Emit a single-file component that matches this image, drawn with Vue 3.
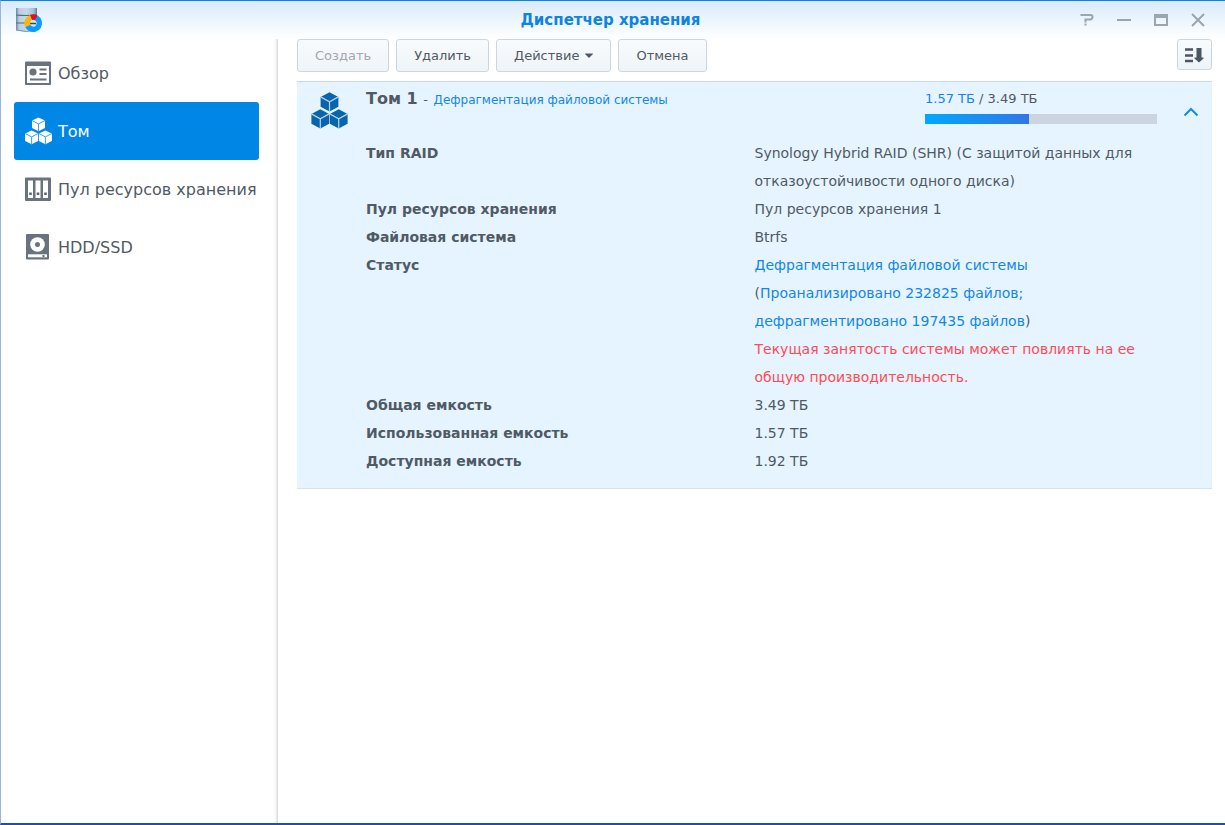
<script setup>
import { ref } from 'vue'

const nav = [
  { id: 'overview', label: 'Обзор' },
  { id: 'volume', label: 'Том' },
  { id: 'pool', label: 'Пул ресурсов хранения' },
  { id: 'disk', label: 'HDD/SSD' },
]
const active = ref('volume')
const expanded = ref(true)
const usedPercent = 45
</script>

<template>
  <div class="window">
    <header class="titlebar">
      <svg class="app-icon" viewBox="0 0 28 26" aria-hidden="true">
        <defs>
          <linearGradient id="cylinder" x1="0" x2="1" y1="0" y2="0">
            <stop offset="0" stop-color="#6488a8" />
            <stop offset="0.15" stop-color="#b9d0e3" />
            <stop offset="0.5" stop-color="#c4d9ea" />
            <stop offset="0.85" stop-color="#a5bfd6" />
            <stop offset="1" stop-color="#587c9d" />
          </linearGradient>
        </defs>
        <path d="M1 1H22V23Q11 26 1 23Z" fill="url(#cylinder)" />
        <path d="M1 8Q11 9 22 8M1 16H22" fill="none" stroke="#58697a" stroke-width="1.2" />
        <path d="M1 23Q11 26 22 23" fill="none" stroke="#7694ae" />
        <circle cx="18.200" cy="16.200" r="4" fill="#dce7ee" />
        <path d="M15 16.500H21" stroke="#3d4852" stroke-width="1.500" />
        <g fill="none" stroke-width="5.500" transform="rotate(-60 18.200 16.200)">
          <circle cx="18.200" cy="16.200" r="6.100" pathLength="360" stroke="#0b9bf8" stroke-dasharray="215 145" />
          <circle cx="18.200" cy="16.200" r="6.100" pathLength="360" stroke="#fcb70a" stroke-dasharray="95 265" stroke-dashoffset="-215" />
          <circle cx="18.200" cy="16.200" r="6.100" pathLength="360" stroke="#e50f24" stroke-dasharray="50 310" stroke-dashoffset="-310" />
        </g>
      </svg>
      <h1>Диспетчер хранения</h1>
      <div class="controls">
        <button type="button" aria-label="Справка">
          <svg viewBox="0 0 16 14"><path d="M1.500 2H11.500Q13.500 2 13.500 4T11.500 6.500H6.500V9.500M6.500 10.500V12.500" /></svg>
        </button>
        <button type="button" aria-label="Свернуть">
          <svg viewBox="0 0 16 14"><path d="M1 7H15" /></svg>
        </button>
        <button type="button" aria-label="Развернуть">
          <svg viewBox="0 0 16 14"><path d="M2 2V12H14V2" /><path d="M1 1H15V5H1Z" class="fill" /></svg>
        </button>
        <button type="button" aria-label="Закрыть">
          <svg viewBox="0 0 16 14"><path d="M2 1L14 13M14 1L2 13" /></svg>
        </button>
      </div>
    </header>

    <div class="body">
      <nav class="sidebar">
        <button
          v-for="item in nav"
          :key="item.id"
          type="button"
          class="nav-item"
          :class="{ active: active === item.id }"
          @click="active = item.id"
        >
          <svg v-if="item.id === 'overview'" class="nav-icon" viewBox="0 0 28 28" aria-hidden="true">
            <path d="M2 2.500H26Q27 2.500 27 3.500V25Q27 26 26 26H2Q1 26 1 25V3.500Q1 2.500 2 2.500ZM3 7V24H25V7Z" fill="#69737f" fill-rule="evenodd" />
            <circle cx="9" cy="13" r="3.600" fill="#69737f" />
            <path d="M15.500 10.500H22.500M15.500 15H22.500M6 20.500H22.500" stroke="#69737f" stroke-width="2" />
          </svg>
          <svg v-else-if="item.id === 'volume'" class="nav-icon" viewBox="0 0 28 28" aria-hidden="true">
            <g v-for="(p, i) in [[14.5, 0.5], [7.6, 13.5], [21.4, 13.5]]" :key="i" :transform="`translate(${p[0]} ${p[1]})`">
              <path d="M0 0L6.500 3V10.500L0 13.800L-6.500 10.500V3Z" fill="#fff" />
              <path d="M-6.500 3L0 6.400L6.500 3M0 6.400V14" fill="none" stroke="#3a9fea" />
            </g>
          </svg>
          <svg v-else-if="item.id === 'pool'" class="nav-icon" viewBox="0 0 28 28" aria-hidden="true">
            <rect x="1" y="2.500" width="26" height="23.500" rx="1" fill="#69737f" />
            <path d="M4 5.500H9V23H4ZM11.500 5.500H16.500V23H11.500ZM19 5.500H24V23H19Z" fill="#fff" />
            <path d="M5.200 17.500H7.800V20H5.200ZM12.700 17.500H15.300V20H12.700ZM20.200 17.500H22.800V20H20.200Z" fill="#59636f" />
          </svg>
          <svg v-else class="nav-icon" viewBox="0 0 28 28" aria-hidden="true">
            <rect x="2" y="1" width="23" height="25.500" rx="1" fill="#69737f" />
            <circle cx="13.500" cy="11.500" r="7.300" fill="#fff" />
            <circle cx="13.500" cy="11.500" r="2.500" fill="#69737f" />
            <path d="M4 21.300H23V24.300H4Z" fill="#fff" />
            <path d="M18.500 22H20.500V24H18.500Z" fill="#69737f" />
          </svg>
          <span>{{ item.label }}</span>
        </button>
      </nav>

      <main class="content">
        <div class="toolbar">
          <button type="button" class="btn" disabled>Создать</button>
          <button type="button" class="btn">Удалить</button>
          <button type="button" class="btn">
            Действие
            <svg class="caret" viewBox="0 0 8 5" aria-hidden="true"><path d="M0 0.500H8V1L4 5L0 1Z" fill="#505a64" /></svg>
          </button>
          <button type="button" class="btn">Отмена</button>
          <button type="button" class="btn sort" aria-label="Сортировка">
            <svg viewBox="0 0 20 16" aria-hidden="true">
              <path d="M1 2.500H9M1 8.500H9M1 14H9" stroke="#4b5662" stroke-width="2.300" />
              <path d="M12.500 1H17.500V10.500H19.500V11.500L15 15.500L10.500 11.500V10.500H12.500Z" fill="#4b5662" />
            </svg>
          </button>
        </div>

        <section class="volume">
          <div class="summary">
            <svg class="volume-icon" viewBox="0 0 38 38" aria-hidden="true">
              <g v-for="(p, i) in [[18.5, 0.3], [9.3, 17.3], [27.7, 17.3]]" :key="i" :transform="`translate(${p[0]} ${p[1]})`">
                <path d="M0 0L8.900 4.600V14.400L0 19.300L-8.900 14.400V4.600Z" fill="#0864ad" />
                <path d="M-8.900 4.600L0 9.400L8.900 4.600M0 9.400V19.500" fill="none" stroke="#b5d6ef" stroke-width="1.200" />
              </g>
            </svg>
            <h2>Том 1 <span class="dash">-</span> <span class="state">Дефрагментация файловой системы</span></h2>
            <div class="usage">
              <div><span class="blue">1.57 ТБ</span> / 3.49 ТБ</div>
              <div class="bar"><div class="used" :style="{ width: usedPercent + '%' }"></div></div>
            </div>
            <button type="button" class="toggle" aria-label="Подробности" :aria-expanded="expanded" @click="expanded = !expanded">
              <svg viewBox="0 0 16 10" :class="{ closed: !expanded }"><path d="M1.500 8.500L8 2L14.500 8.500" /></svg>
            </button>
          </div>

          <table v-if="expanded" class="details">
            <tbody>
              <tr><th scope="row">Тип RAID</th><td>Synology Hybrid RAID (SHR) (С защитой данных для отказоустойчивости одного диска)</td></tr>
              <tr><th scope="row">Пул ресурсов хранения</th><td>Пул ресурсов хранения 1</td></tr>
              <tr><th scope="row">Файловая система</th><td>Btrfs</td></tr>
              <tr>
                <th scope="row">Статус</th>
                <td>
                  <span class="blue">Дефрагментация файловой системы</span><br />
                  (<span class="blue">Проанализировано 232825 файлов;<br />дефрагментировано 197435 файлов</span>)
                  <div class="warning">Текущая занятость системы может повлиять на ее общую производительность.</div>
                </td>
              </tr>
              <tr><th scope="row">Общая емкость</th><td>3.49 ТБ</td></tr>
              <tr><th scope="row">Использованная емкость</th><td>1.57 ТБ</td></tr>
              <tr><th scope="row">Доступная емкость</th><td>1.92 ТБ</td></tr>
            </tbody>
          </table>
        </section>
      </main>
    </div>
  </div>
</template>

<style>
body {
  background: #fff;
}
</style>

<style scoped>
* {
  box-sizing: border-box;
}
.window {
  display: flex;
  flex-direction: column;
  min-height: 100vh;
  border-top: 1px solid #0a84e4;
  border-left: 1px solid #9ab4e2;
  border-bottom: 2px solid #1e51a8;
  background: linear-gradient(#d9ebfa, #fff 38px);
  color: #505a64;
  font-family: Verdana, "DejaVu Sans", sans-serif;
  font-size: 13px;
}
button {
  border: 0;
  background: none;
  color: inherit;
  font: inherit;
}
.titlebar {
  display: grid;
  grid-template-columns: 1fr auto 1fr;
  align-items: center;
  height: 38px;
  padding: 0 19px 0 14px;
}
.app-icon {
  width: 28px;
  height: 26px;
}
h1 {
  margin: 0;
  color: #0e83e0;
  font-size: 15px;
  line-height: 20px;
}
.controls {
  display: flex;
  justify-content: flex-end;
  gap: 21px;
}
.controls button {
  display: flex;
  padding: 0;
}
.controls svg {
  width: 16px;
  height: 14px;
  fill: none;
  stroke: #9aa5ae;
  stroke-width: 2;
}
.controls .fill {
  fill: #9aa5ae;
  stroke: none;
}
.body {
  display: flex;
  flex: 1;
}
.sidebar {
  display: flex;
  flex: 0 0 277px;
  flex-direction: column;
  padding: 5px 18px 0 13px;
  border-right: 1px solid #dcdcdc;
  box-shadow: inset -3px 0 3px -2px #e4e4e4;
}
.nav-item {
  display: flex;
  align-items: center;
  gap: 6px;
  height: 58px;
  padding: 0 0 0 10px;
  border-radius: 3px;
  font-size: 16px;
  text-align: left;
  white-space: nowrap;
}
.nav-item.active {
  background: #0086e5;
  color: #fff;
}
.nav-icon {
  flex: none;
  width: 28px;
  height: 28px;
}
.content {
  flex: 1;
  min-width: 0;
  padding: 0 13px 0 19px;
}
.toolbar {
  display: flex;
  gap: 7px;
  margin-bottom: 9px;
}
.btn {
  display: flex;
  align-items: center;
  gap: 6px;
  height: 33px;
  padding: 0 17px;
  border: 1px solid #ccd6e0;
  border-radius: 3px;
  background: linear-gradient(#f8fbfd, #eff4f8);
}
.btn:disabled {
  color: #a0a8b0;
}
.caret {
  width: 8px;
  height: 5px;
}
.sort {
  width: 35px;
  height: 31px;
  margin-left: auto;
  padding: 0 6px;
}
.sort svg {
  width: 20px;
  height: 16px;
}
.volume {
  padding-bottom: 13px;
  border-top: 1px solid #cbd9e6;
  border-bottom: 1px solid #d5e3ee;
  background: #e6f4ff;
}
.summary {
  display: flex;
  height: 57px;
  padding: 0 13px 0 14px;
}
.volume-icon {
  width: 38px;
  height: 38px;
  margin-top: 10px;
}
h2 {
  flex: 1;
  margin: 7px 0 0 17px;
  font-size: 16px;
  line-height: 20px;
}
.dash {
  font-size: 13px;
  font-weight: 400;
}
.state {
  color: #1486e8;
  font-size: 12px;
  font-weight: 400;
}
.blue {
  color: #1486e8;
}
.usage {
  flex: 0 0 232px;
  padding-top: 9px;
  font-size: 13px;
  line-height: 16px;
}
.bar {
  height: 10px;
  margin-top: 7px;
  background: #ccd5df;
}
.used {
  height: 100%;
  background: linear-gradient(90deg, #00a8ff, #3078e4);
}
.toggle {
  width: 16px;
  height: 16px;
  margin: 22px 0 0 26px;
  padding: 3px 0;
}
.toggle svg {
  display: block;
  width: 16px;
  height: 10px;
  fill: none;
  stroke: #0e8ee9;
  stroke-width: 2;
}
.closed {
  transform: rotate(180deg);
}
.details {
  width: 100%;
  border-spacing: 0;
  table-layout: fixed;
  font-size: 14px;
  line-height: 28px;
}
th,
td {
  padding: 0;
  text-align: left;
  vertical-align: top;
}
th {
  width: 50%;
  padding-left: 69px;
}
td {
  padding-right: 70px;
}
.warning {
  color: #ff4b55;
}
</style>
